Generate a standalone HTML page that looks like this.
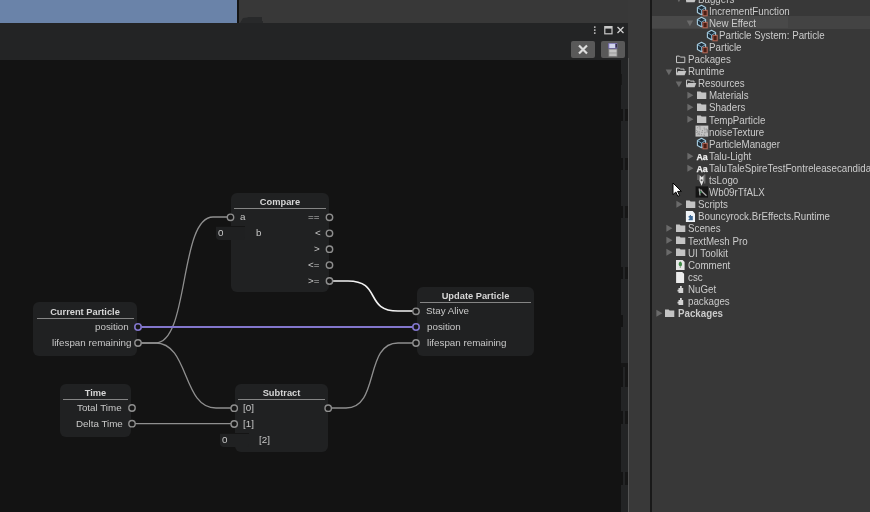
<!DOCTYPE html>
<html><head><meta charset="utf-8">
<style>
*{margin:0;padding:0;box-sizing:border-box}
html,body{width:870px;height:512px;overflow:hidden;background:#383838;font-family:"Liberation Sans",sans-serif}
.abs{position:absolute}
#blue{left:0;top:0;width:237.5px;height:23px;background:#6a83a9}
#blueR{left:237px;top:0;width:2px;height:23px;background:#151515}
#win{left:0;top:23px;width:628px;height:489px;background:#232425}
#canvas{left:0;top:60px;width:621px;height:452px;background:#131313;overflow:hidden}
#strip{left:628px;top:0;width:22px;height:512px;background:#393939}
#vline{left:650px;top:0;width:2px;height:512px;background:#191919}
#lline{left:628px;top:58px;width:1px;height:454px;background:#555555}
#proj{left:652px;top:0;width:218px;height:512px;background:#383838;overflow:hidden}
.btn{top:41px;width:24px;height:17px;background:#595959;border-radius:2px}
.node{position:absolute;background:#202122;border-radius:6px}
.node .t{position:absolute;left:0;right:0;line-height:1;text-align:center;font-weight:bold;font-size:9.3px;color:#d6d6d6;white-space:nowrap;transform:scaleY(1.06);transform-origin:50% 100%}
.node .sep{position:absolute;height:1.2px;background:#858585}
.lbl{position:absolute;font-size:9.8px;color:#c8c8c8;white-space:nowrap;line-height:12px}
.row{position:absolute;left:0;width:218px;height:12px;font-size:9.5px;color:#c4c4c4;white-space:nowrap;line-height:12px}
.row span{position:absolute;top:0}

#proj .tx{position:absolute;font-size:9.75px;line-height:12px;color:#cbcbcb;white-space:nowrap;transform:scaleY(1.07);transform-origin:0 9.4px}
#proj .ic{position:absolute;overflow:visible}
body{-webkit-font-smoothing:antialiased}
.lbl,.node .t,#proj .tx{will-change:transform}
#sel{position:absolute;left:0;top:16px;width:218px;height:12.5px;background:#434343}
</style></head><body>
<div id="blue" class="abs"></div>
<div id="blueR" class="abs"></div>
<div id="win" class="abs"></div>
<svg class="abs" style="left:238px;top:14px" width="30" height="10"><path d="M2 9 L5 4 L9.5 3.5 L10 2.9 H24 V7 H25 V9 Z" fill="#28292a"/></svg>
<div id="strip" class="abs"></div>
<div id="vline" class="abs"></div>
<div id="lline" class="abs"></div>
<div class="abs" style="left:621px;top:109px;width:2px;height:12px;background:#131313"></div><div class="abs" style="left:625px;top:109px;width:2.5px;height:12px;background:#161616"></div><div class="abs" style="left:621px;top:158px;width:2px;height:12px;background:#131313"></div><div class="abs" style="left:625px;top:158px;width:2.5px;height:12px;background:#161616"></div><div class="abs" style="left:621px;top:206px;width:2px;height:12px;background:#131313"></div><div class="abs" style="left:625px;top:206px;width:2.5px;height:12px;background:#161616"></div><div class="abs" style="left:621px;top:267px;width:2px;height:12px;background:#131313"></div><div class="abs" style="left:625px;top:267px;width:2.5px;height:12px;background:#161616"></div><div class="abs" style="left:621px;top:411px;width:2px;height:13px;background:#131313"></div><div class="abs" style="left:625px;top:411px;width:2.5px;height:13px;background:#161616"></div><div class="abs" style="left:621px;top:472px;width:2px;height:13px;background:#131313"></div><div class="abs" style="left:625px;top:472px;width:2.5px;height:13px;background:#161616"></div><div class="abs" style="left:621px;top:315px;width:2px;height:12px;background:#131313"></div><div class="abs" style="left:621px;top:74px;width:1px;height:11px;background:#171717"></div><div class="abs" style="left:621px;top:363px;width:6.5px;height:4px;background:#161616"></div><div class="abs" style="left:621px;top:367px;width:1.5px;height:20px;background:#131313"></div><div class="abs" style="left:625px;top:367px;width:2.5px;height:20px;background:#161616"></div>

<!-- title icons -->
<svg class="abs" style="left:590px;top:23px" width="38" height="16" viewBox="0 0 38 16">
  <circle cx="4.8" cy="4.1" r="0.9" fill="#c9c9c9"/>
  <circle cx="4.8" cy="7.1" r="0.9" fill="#c9c9c9"/>
  <circle cx="4.8" cy="10.1" r="0.9" fill="#c9c9c9"/>
  <rect x="14.8" y="3.6" width="7.2" height="7.2" fill="none" stroke="#c9c9c9" stroke-width="1.2"/>
  <rect x="14.8" y="3.6" width="7.2" height="2" fill="#c9c9c9"/>
  <path d="M27.5 4 L33.5 10 M33.5 4 L27.5 10" stroke="#d0d0d0" stroke-width="1.3"/>
</svg>
<div class="abs btn" style="left:571px"></div>
<div class="abs btn" style="left:601px"></div>
<svg class="abs" style="left:571px;top:41px" width="54" height="17" viewBox="0 0 54 17">
  <path d="M8 4.5 L16 12.5 M16 4.5 L8 12.5" stroke="#dcdcdc" stroke-width="2.2"/>
  <rect x="37.3" y="2.2" width="9" height="5.4" fill="#7f74c2"/>
  <rect x="38.3" y="2.8" width="5.8" height="4.2" fill="#d2d6ee"/>
  <rect x="44.6" y="3" width="1.2" height="3.6" fill="#262626"/>
  <rect x="37.5" y="8" width="8.8" height="7.6" fill="#8c8c8c"/>
  <rect x="38.3" y="8.6" width="7.2" height="3" fill="#c4c4c4"/>
  <rect x="38.3" y="12.3" width="7.2" height="2.8" fill="#bcbcbc"/>
</svg>

<div id="canvas" class="abs">
<svg class="abs" style="left:0;top:0" width="621" height="452" viewBox="0 60 621 452">
  <g fill="none" stroke-width="1.3">
    <path d="M138 343 H155.5 C189.5 343 179 217 213 217 H230" stroke="#8f8f8f"/>
    <path d="M138 343 H155.5 C189.5 343 182 408 216 408 H234" stroke="#8f8f8f"/>
    <path d="M132 423.7 H234" stroke="#8f8f8f"/>
    <path d="M328 408 H346 C380 408 364 343 398 343 H416" stroke="#8f8f8f"/>
    <path d="M330 281 H348 C382 281 364 311 398 311 H416" stroke="#f2f2f2" stroke-width="1.6"/>
    <path d="M138 327 H416" stroke="#8276cc" stroke-width="2"/>
  </g>
</svg>
</div>

<!-- nodes (page coords) -->
<div class="node" style="left:231px;top:193px;width:98px;height:99px">
  <div class="t" style="top:4.5px">Compare</div>
  <div class="sep" style="left:3px;right:3px;top:15px"></div>
</div>
<div class="node" style="left:33px;top:302px;width:104px;height:54px">
  <div class="t" style="top:6px">Current Particle</div>
  <div class="sep" style="left:3.5px;right:3px;top:15.5px"></div>
</div>
<div class="node" style="left:417px;top:287px;width:117px;height:69px">
  <div class="t" style="top:4.5px">Update Particle</div>
  <div class="sep" style="left:3px;right:3px;top:14.5px"></div>
</div>
<div class="node" style="left:60px;top:384px;width:71px;height:53px">
  <div class="t" style="top:4.5px">Time</div>
  <div class="sep" style="left:3px;right:3px;top:14.5px"></div>
</div>
<div class="node" style="left:235px;top:384px;width:93px;height:68px">
  <div class="t" style="top:5px">Subtract</div>
  <div class="sep" style="left:3px;right:3px;top:14.5px"></div>
</div>

<!-- input fields -->
<div class="abs" style="left:215.5px;top:225.5px;width:29.5px;height:14px;background:#1f2021;border-top:1px solid #151515;border-radius:0 0 3px 4px"></div>
<div class="abs" style="left:219.5px;top:433px;width:29px;height:13.5px;background:#202122;border-top:1px solid #151515;border-radius:0 0 3px 4px"></div>

<!-- labels -->
<div class="lbl" style="left:239.6px;top:211px">a</div>
<div class="lbl" style="left:256.0px;top:227px">b</div>
<div class="lbl" style="left:218.0px;top:227px">0</div>
<div class="lbl" style="left:307.8px;top:211px">==</div>
<div class="lbl" style="left:314.6px;top:227px">&lt;</div>
<div class="lbl" style="left:314.3px;top:243px">&gt;</div>
<div class="lbl" style="left:307.5px;top:259px">&lt;=</div>
<div class="lbl" style="left:307.5px;top:275px">&gt;=</div>

<div class="lbl" style="left:95.3px;top:321px">position</div>
<div class="lbl" style="left:52.2px;top:337px">lifespan remaining</div>

<div class="lbl" style="left:426.0px;top:305px">Stay Alive</div>
<div class="lbl" style="left:427.0px;top:321px">position</div>
<div class="lbl" style="left:427.0px;top:337px">lifespan remaining</div>

<div class="lbl" style="left:76.5px;top:402px">Total Time</div>
<div class="lbl" style="left:76.3px;top:418px">Delta Time</div>

<div class="lbl" style="left:242.6px;top:402px">[0]</div>
<div class="lbl" style="left:242.6px;top:418px">[1]</div>
<div class="lbl" style="left:259.3px;top:433.5px">[2]</div>
<div class="lbl" style="left:222.0px;top:433.5px">0</div>

<!-- ports -->
<svg class="abs" style="left:0;top:0" width="621" height="512">
  <g fill="#161616" stroke="#8e8e8e" stroke-width="1.4">
    <circle cx="230.5" cy="217.3" r="3.2"/>
    <circle cx="329.5" cy="217.3" r="3.2"/>
    <circle cx="329.5" cy="233.3" r="3.2"/>
    <circle cx="329.5" cy="249.2" r="3.2"/>
    <circle cx="329.5" cy="265.1" r="3.2"/>
    <circle cx="329.5" cy="281" r="3.2"/>
    <circle cx="138" cy="343" r="3.2"/>
    <circle cx="416" cy="311.3" r="3.2"/>
    <circle cx="416" cy="343" r="3.2"/>
    <circle cx="132" cy="408" r="3.2"/>
    <circle cx="132" cy="423.7" r="3.2"/>
    <circle cx="234.2" cy="408.2" r="3.2"/>
    <circle cx="234.2" cy="424" r="3.2"/>
    <circle cx="328.2" cy="408.2" r="3.2"/>
  </g>
  <g fill="#161616" stroke="#8276cc" stroke-width="1.6">
    <circle cx="138" cy="327" r="3.2"/>
    <circle cx="416" cy="327" r="3.2"/>
  </g>
</svg>

<div id="proj" class="abs">
<div id="sel"></div><div style="position:absolute;left:0;top:16px;width:136px;height:12.3px;background:#494949"></div>
<svg width="0" height="0" style="position:absolute">
<defs>
 <symbol id="i-folder" viewBox="0 0 13 12"><path d="M1 2.6 H4.6 L5.6 3.6 H10.3 V10.1 H1 Z" fill="#c4c4c4"/></symbol>
 <symbol id="i-outline" viewBox="0 0 13 12"><path d="M1.5 3.1 H4.4 L5.4 4.1 H9.8 V9.6 H1.5 Z" fill="none" stroke="#c4c4c4" stroke-width="1"/></symbol>
 <symbol id="i-open" viewBox="0 0 13 12"><path d="M1.5 9.5 V3.1 H4.4 L5.4 4.1 H9 V5.6" fill="none" stroke="#c4c4c4" stroke-width="1"/><path d="M1 10.2 L3 5.9 H11.3 L9.6 10.2 Z" fill="#c4c4c4"/></symbol>
 <symbol id="i-prefab" viewBox="0 0 13 12" overflow="visible">
   <path d="M5.5 1.3 L9.6 3.6 V8.4 L5.5 10.7 L1.4 8.4 V3.6 Z" fill="#1c2c38" stroke="#a9cde0" stroke-width="1.1" stroke-linejoin="round"/>
   <path d="M1.6 3.8 L5.5 6 L9.4 3.8 M5.5 6 V10.4" fill="none" stroke="#7fb0cc" stroke-width="0.9"/>
   <rect x="6.9" y="6.3" width="4.3" height="5.5" fill="#4c1e14" stroke="#b86c5a" stroke-width="1"/>
 </symbol>
 <symbol id="i-texture" viewBox="0 0 13 12" overflow="visible"><rect x="-0.5" y="0.6" width="12.8" height="11" fill="#c4c4c4"/><path d="M2.7 6.3h1v1.2h-1zM5.5 6.7h1.3v0.8h-1zM10.5 5.6h1.3v0.8h-1zM2.2 8.0h1.3v1.2h-1zM5.5 7.3h0.8v0.8h-1zM7.3 9.5h1.3v1h-1zM8.5 7.6h0.8v0.8h-1zM8.7 6.8h1v0.8h-1zM9.5 3.6h1.3v1.2h-1zM10.6 4.8h1v1h-1zM8.4 6.7h0.8v1h-1zM1.1 2.3h0.8v1h-1zM11.1 5.3h1.3v1h-1zM4.8 9.2h1.3v1h-1zM6.1 5.0h0.8v1h-1zM7.8 10.1h1v1.2h-1zM7.7 2.6h1v1.2h-1zM10.4 6.6h1.3v1.2h-1zM2.4 9.1h1.3v1h-1zM3.3 1.6h1.3v1h-1zM1.0 8.8h1v0.8h-1zM0.2 5.2h1v0.8h-1zM0.5 7.0h0.8v1h-1zM8.3 4.2h1v1.2h-1zM2.7 1.4h0.8v0.8h-1zM1.2 6.2h0.8v1h-1zM3.4 3.6h1.3v0.8h-1zM11.3 4.3h1v0.8h-1z" fill="#8e8e8e"/></symbol>
 <symbol id="i-font" viewBox="0 0 13 12"><text x="0.4" y="9.5" font-family="Liberation Sans" font-weight="bold" font-size="8.8" fill="#f0f0f0" stroke="#f0f0f0" stroke-width="0.25" letter-spacing="0.1">Aa</text></symbol>
 <symbol id="i-sprite" viewBox="0 0 13 12" overflow="visible"><path d="M2 0.5 V6 M8.8 0.5 V9.5" stroke="#9a9a9a" stroke-width="0.8"/><path d="M3.6 1 L5.8 3.2 L7.6 1.2 V6.8 L5.6 11.8 L3.4 6.8 Z" fill="#e2e2e2"/><circle cx="5.6" cy="6.2" r="1" fill="#555"/></symbol>
 <symbol id="i-image" viewBox="0 0 13 12" overflow="visible"><rect x="-0.4" y="0.4" width="12.4" height="11.2" fill="#141414"/><path d="M3.2 2.5 L4 9.5 M4.5 3.5 L6.5 6 L10.5 9.8" fill="none" stroke="#a8a8a8" stroke-width="1.3"/><circle cx="4.6" cy="6.2" r="1" fill="#3f8f5a"/></symbol>
 <symbol id="i-asmdef" viewBox="0 0 13 12" overflow="visible"><path d="M0.9 1.1 H7.6 L10 3.5 V12 H0.9 Z" fill="#f0f4f8"/><path d="M3.6 6 H4.8 V5 H6 V6 H7.8 V10.2 H3.6 V9 H4.4 V7.6 H3.6 Z" fill="#3d6a98"/></symbol>
 <symbol id="i-script" viewBox="0 0 13 12" overflow="visible"><path d="M1 1.9 H7.6 L9.6 3.9 V12 H1 Z" fill="#e6e6e6"/><path d="M5.3 3.5 C3.6 4 3.4 6.5 4 7.6 C4.6 8.6 6.3 8.6 6.8 7.5 C7.3 6.3 7 4 5.3 3.5 Z" fill="#3f8a45"/><path d="M5.3 8 V10" stroke="#6a8a6a" stroke-width="0.8"/></symbol>
 <symbol id="i-doc" viewBox="0 0 13 12" overflow="visible"><path d="M1.1 0.9 H7.2 L9.1 2.8 V11.9 H1.1 Z" fill="#ececec"/></symbol>
 <symbol id="i-puzzle" viewBox="0 0 13 12"><path d="M3.5 5 H5 V3 H6.8 V5 H8.2 V10 H3.5 V8.6 H2.5 V6.8 H3.5 Z" fill="#d4d4d4"/></symbol>
 <symbol id="a-down" viewBox="0 0 8 12"><path d="M0.7 4.4 H7.1 L3.9 10.2 Z" fill="#6a6a6a"/></symbol>
 <symbol id="a-right" viewBox="0 0 8 12"><path d="M1.4 2.8 V9.8 L7.4 6.3 Z" fill="#6a6a6a"/></symbol>
</defs>
</svg>
<div class="tx" style="left:46.20px;top:-6.49px">Baggers</div>
<svg class="ic" style="left:33.30px;top:-7.80px" width="13" height="12"><use href="#i-open"/></svg>
<svg class="ic" style="left:23.40px;top:-7.80px" width="8" height="12"><use href="#a-down"/></svg>
<div class="tx" style="left:56.50px;top:5.61px">IncrementFunction</div>
<svg class="ic" style="left:43.80px;top:4.30px" width="13" height="12"><use href="#i-prefab"/></svg>
<div class="tx" style="left:56.50px;top:17.71px">New Effect</div>
<svg class="ic" style="left:43.80px;top:16.40px" width="13" height="12"><use href="#i-prefab"/></svg>
<svg class="ic" style="left:33.85px;top:16.40px" width="8" height="12"><use href="#a-down"/></svg>
<div class="tx" style="left:66.80px;top:29.81px">Particle System: Particle</div>
<svg class="ic" style="left:54.30px;top:28.50px" width="13" height="12"><use href="#i-prefab"/></svg>
<div class="tx" style="left:56.50px;top:41.91px">Particle</div>
<svg class="ic" style="left:43.80px;top:40.60px" width="13" height="12"><use href="#i-prefab"/></svg>
<div class="tx" style="left:35.90px;top:54.01px">Packages</div>
<svg class="ic" style="left:22.80px;top:52.70px" width="13" height="12"><use href="#i-outline"/></svg>
<div class="tx" style="left:35.90px;top:66.11px">Runtime</div>
<svg class="ic" style="left:22.80px;top:64.80px" width="13" height="12"><use href="#i-open"/></svg>
<svg class="ic" style="left:12.95px;top:64.80px" width="8" height="12"><use href="#a-down"/></svg>
<div class="tx" style="left:46.20px;top:78.21px">Resources</div>
<svg class="ic" style="left:33.30px;top:76.90px" width="13" height="12"><use href="#i-open"/></svg>
<svg class="ic" style="left:23.40px;top:76.90px" width="8" height="12"><use href="#a-down"/></svg>
<div class="tx" style="left:56.50px;top:90.31px">Materials</div>
<svg class="ic" style="left:43.80px;top:89.00px" width="13" height="12"><use href="#i-folder"/></svg>
<svg class="ic" style="left:33.85px;top:89.00px" width="8" height="12"><use href="#a-right"/></svg>
<div class="tx" style="left:56.50px;top:102.41px">Shaders</div>
<svg class="ic" style="left:43.80px;top:101.10px" width="13" height="12"><use href="#i-folder"/></svg>
<svg class="ic" style="left:33.85px;top:101.10px" width="8" height="12"><use href="#a-right"/></svg>
<div class="tx" style="left:56.50px;top:114.51px">TempParticle</div>
<svg class="ic" style="left:43.80px;top:113.20px" width="13" height="12"><use href="#i-folder"/></svg>
<svg class="ic" style="left:33.85px;top:113.20px" width="8" height="12"><use href="#a-right"/></svg>
<div class="tx" style="left:56.50px;top:126.61px">noiseTexture</div>
<svg class="ic" style="left:43.80px;top:125.30px" width="13" height="12"><use href="#i-texture"/></svg>
<div class="tx" style="left:56.50px;top:138.71px">ParticleManager</div>
<svg class="ic" style="left:43.80px;top:137.40px" width="13" height="12"><use href="#i-prefab"/></svg>
<div class="tx" style="left:56.50px;top:150.81px">Talu-Light</div>
<svg class="ic" style="left:43.80px;top:149.50px" width="13" height="12"><use href="#i-font"/></svg>
<svg class="ic" style="left:33.85px;top:149.50px" width="8" height="12"><use href="#a-right"/></svg>
<div class="tx" style="left:56.50px;top:162.91px">TaluTaleSpireTestFontreleasecandidate</div>
<svg class="ic" style="left:43.80px;top:161.60px" width="13" height="12"><use href="#i-font"/></svg>
<svg class="ic" style="left:33.85px;top:161.60px" width="8" height="12"><use href="#a-right"/></svg>
<div class="tx" style="left:56.50px;top:175.01px">tsLogo</div>
<svg class="ic" style="left:43.80px;top:173.70px" width="13" height="12"><use href="#i-sprite"/></svg>
<div class="tx" style="left:56.50px;top:187.11px">Wb09rTfALX</div>
<svg class="ic" style="left:43.80px;top:185.80px" width="13" height="12"><use href="#i-image"/></svg>
<div class="tx" style="left:46.20px;top:199.21px">Scripts</div>
<svg class="ic" style="left:33.30px;top:197.90px" width="13" height="12"><use href="#i-folder"/></svg>
<svg class="ic" style="left:23.40px;top:197.90px" width="8" height="12"><use href="#a-right"/></svg>
<div class="tx" style="left:46.20px;top:211.31px">Bouncyrock.BrEffects.Runtime</div>
<svg class="ic" style="left:33.30px;top:210.00px" width="13" height="12"><use href="#i-asmdef"/></svg>
<div class="tx" style="left:35.90px;top:223.41px">Scenes</div>
<svg class="ic" style="left:22.80px;top:222.10px" width="13" height="12"><use href="#i-folder"/></svg>
<svg class="ic" style="left:12.95px;top:222.10px" width="8" height="12"><use href="#a-right"/></svg>
<div class="tx" style="left:35.90px;top:235.51px">TextMesh Pro</div>
<svg class="ic" style="left:22.80px;top:234.20px" width="13" height="12"><use href="#i-folder"/></svg>
<svg class="ic" style="left:12.95px;top:234.20px" width="8" height="12"><use href="#a-right"/></svg>
<div class="tx" style="left:35.90px;top:247.61px">UI Toolkit</div>
<svg class="ic" style="left:22.80px;top:246.30px" width="13" height="12"><use href="#i-folder"/></svg>
<svg class="ic" style="left:12.95px;top:246.30px" width="8" height="12"><use href="#a-right"/></svg>
<div class="tx" style="left:35.90px;top:259.71px">Comment</div>
<svg class="ic" style="left:22.80px;top:258.40px" width="13" height="12"><use href="#i-script"/></svg>
<div class="tx" style="left:35.90px;top:271.81px">csc</div>
<svg class="ic" style="left:22.80px;top:270.50px" width="13" height="12"><use href="#i-doc"/></svg>
<div class="tx" style="left:35.90px;top:283.91px">NuGet</div>
<svg class="ic" style="left:22.80px;top:282.60px" width="13" height="12"><use href="#i-puzzle"/></svg>
<div class="tx" style="left:35.90px;top:296.01px">packages</div>
<svg class="ic" style="left:22.80px;top:294.70px" width="13" height="12"><use href="#i-puzzle"/></svg>
<div class="tx" style="left:25.60px;top:308.11px"><b style="font-weight:bold">Packages</b></div>
<svg class="ic" style="left:12.30px;top:306.80px" width="13" height="12"><use href="#i-folder"/></svg>
<svg class="ic" style="left:2.50px;top:306.80px" width="8" height="12"><use href="#a-right"/></svg>

</div>
<svg class="abs" style="left:672px;top:182px" width="12" height="16"><path d="M1 1 V12.6 L3.8 10 L5.8 14.3 L7.6 13.5 L5.6 9.4 H9.4 Z" fill="#fff" stroke="#000" stroke-width="1"/></svg>
</body></html>
